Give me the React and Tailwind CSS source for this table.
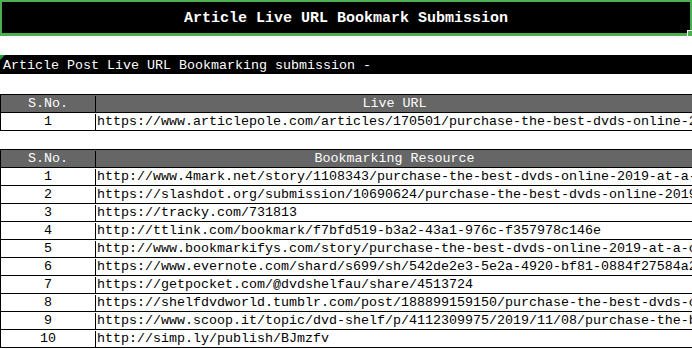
import React from 'react';

const liveUrl = 'https://www.articlepole.com/articles/170501/purchase-the-best-dvds-online-2019-at-a-cheap-price';

const resources = [
    'http://www.4mark.net/story/1108343/purchase-the-best-dvds-online-2019-at-a-cheap-price',
    'https://slashdot.org/submission/10690624/purchase-the-best-dvds-online-2019-at-a-cheap-price',
    'https://tracky.com/731813',
    'http://ttlink.com/bookmark/f7bfd519-b3a2-43a1-976c-f357978c146e',
    'http://www.bookmarkifys.com/story/purchase-the-best-dvds-online-2019-at-a-cheap-price',
    'https://www.evernote.com/shard/s699/sh/542de2e3-5e2a-4920-bf81-0884f27584a2/purchase-the-best-dvds',
    'https://getpocket.com/@dvdshelfau/share/4513724',
    'https://shelfdvdworld.tumblr.com/post/188899159150/purchase-the-best-dvds-online-2019',
    'https://www.scoop.it/topic/dvd-shelf/p/4112309975/2019/11/08/purchase-the-best-dvds-online-2019',
    'http://simp.ly/publish/BJmzfv',
];

function HeaderRow({ label }) {
    return (
        <div className="flex h-[18px] border-b border-black bg-[#666666] text-white leading-[16px] pt-[1px]">
            <div className="w-[95px] shrink-0 border-r border-black text-center">S.No.</div>
            <div className="flex-1 text-center whitespace-nowrap">{label}</div>
        </div>
    );
}

function DataRow({ no, url }) {
    return (
        <div className="flex h-[18px] border-b border-black text-black leading-[16px] pt-[1px]">
            <div className="w-[95px] shrink-0 border-r border-black text-center">{no}</div>
            <div className="flex-1 overflow-hidden whitespace-nowrap pl-[1px]">{url}</div>
        </div>
    );
}

export default function App() {
    return (
        <div className="w-[692px] h-[349px] overflow-hidden bg-white font-['Liberation_Mono',monospace] text-[13.33px]">
            <div className="relative h-[36px] border-2 border-b-[3px] border-[#4caf50] bg-black flex items-center justify-center pt-[3px]">
                <h1 className="text-white font-bold text-[15px] whitespace-nowrap">Article Live URL Bookmark Submission</h1>
                <div className="absolute -right-[2px] -bottom-[3px] w-[5px] h-[6px] bg-[#4caf50] border-l border-t border-white" />
            </div>

            <div className="relative mt-[19px] h-[19px] bg-black text-white leading-[17px] pt-[2px] pl-[3px] whitespace-nowrap">
                Article Post Live URL Bookmarking submission -
                <svg className="absolute left-0 top-0" width="5" height="5" viewBox="0 0 5 5">
                    <polygon points="0,0 5,0 0,5" fill="#1e9e3a" />
                </svg>
            </div>

            <div className="mt-[20px] w-[693px] border-t border-l border-black">
                <HeaderRow label="Live URL" />
                <DataRow no="1" url={liveUrl} />
            </div>

            <div className="mt-[18px] w-[693px] border-t border-l border-black">
                <HeaderRow label="Bookmarking Resource" />
                {resources.map((url, i) => (
                    <DataRow key={i} no={i + 1} url={url} />
                ))}
            </div>
        </div>
    );
}
